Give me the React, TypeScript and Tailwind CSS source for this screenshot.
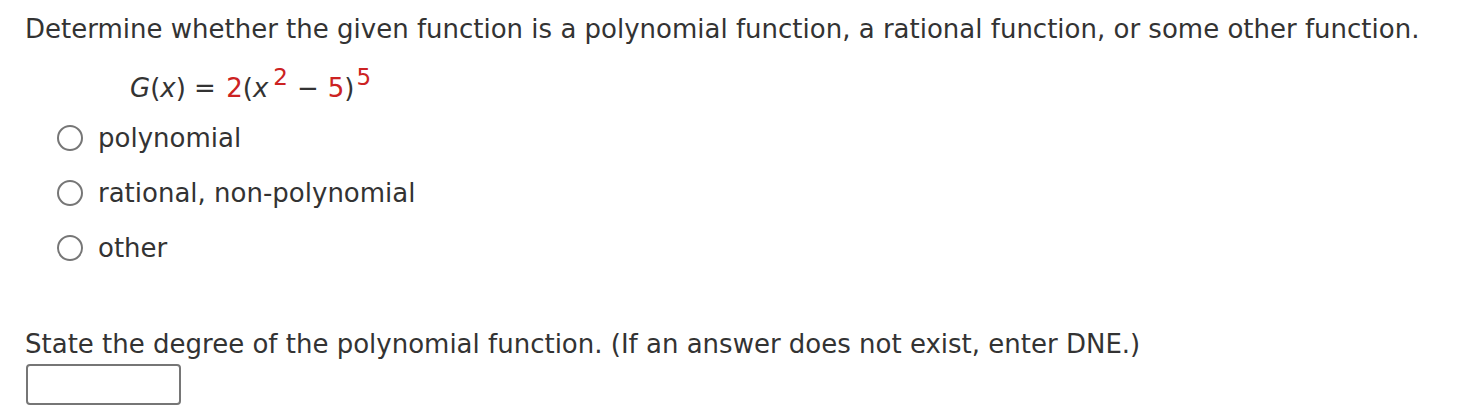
const options = ['polynomial', 'rational, non-polynomial', 'other'];

function Radio() {
  return <span className="inline-block w-[26px] h-[26px] rounded-full border-2 border-[#767676] bg-white shrink-0" />;
}

function Sup({ children, gap }: { children: string; gap: string }) {
  return <span className={`relative -top-[12px] ${gap} text-[#cc2222] text-[23px] leading-none`}>{children}</span>;
}

export default function App() {
  return (
    <div className="bg-white text-[#333333] text-[26px] leading-[30px] px-[25px] pt-[14px]" style={{ fontFamily: '"DejaVu Sans", Verdana, sans-serif' }}>
      <p>Determine whether the given function is a polynomial function, a rational function, or some other function.</p>
      <p className="pl-[105px] mt-[29px] h-[30px]">
        <i>G</i>(<i>x</i>){' = '}<span className="text-[#cc2222] ml-[2px]">2</span>(<i>x</i><Sup gap="ml-[5px]">2</Sup>
        <span className="mx-[9px]">−</span>
        <span className="text-[#cc2222]">5</span>)<Sup gap="ml-[2px]">5</Sup>
      </p>
      <div className="flex flex-col gap-[25px] mt-[20px] pl-[32px]">
        {options.map((o) => (
          <label key={o} className="flex items-center gap-[15px] h-[30px]">
            <Radio />
            <span>{o}</span>
          </label>
        ))}
      </div>
      <p className="mt-[66px]">State the degree of the polynomial function. (If an answer does not exist, enter DNE.)</p>
      <div className="mt-[5px] ml-[1px] w-[155px] h-[41px] rounded-[4px] border-2 border-[#767676]" />
    </div>
  );
}
